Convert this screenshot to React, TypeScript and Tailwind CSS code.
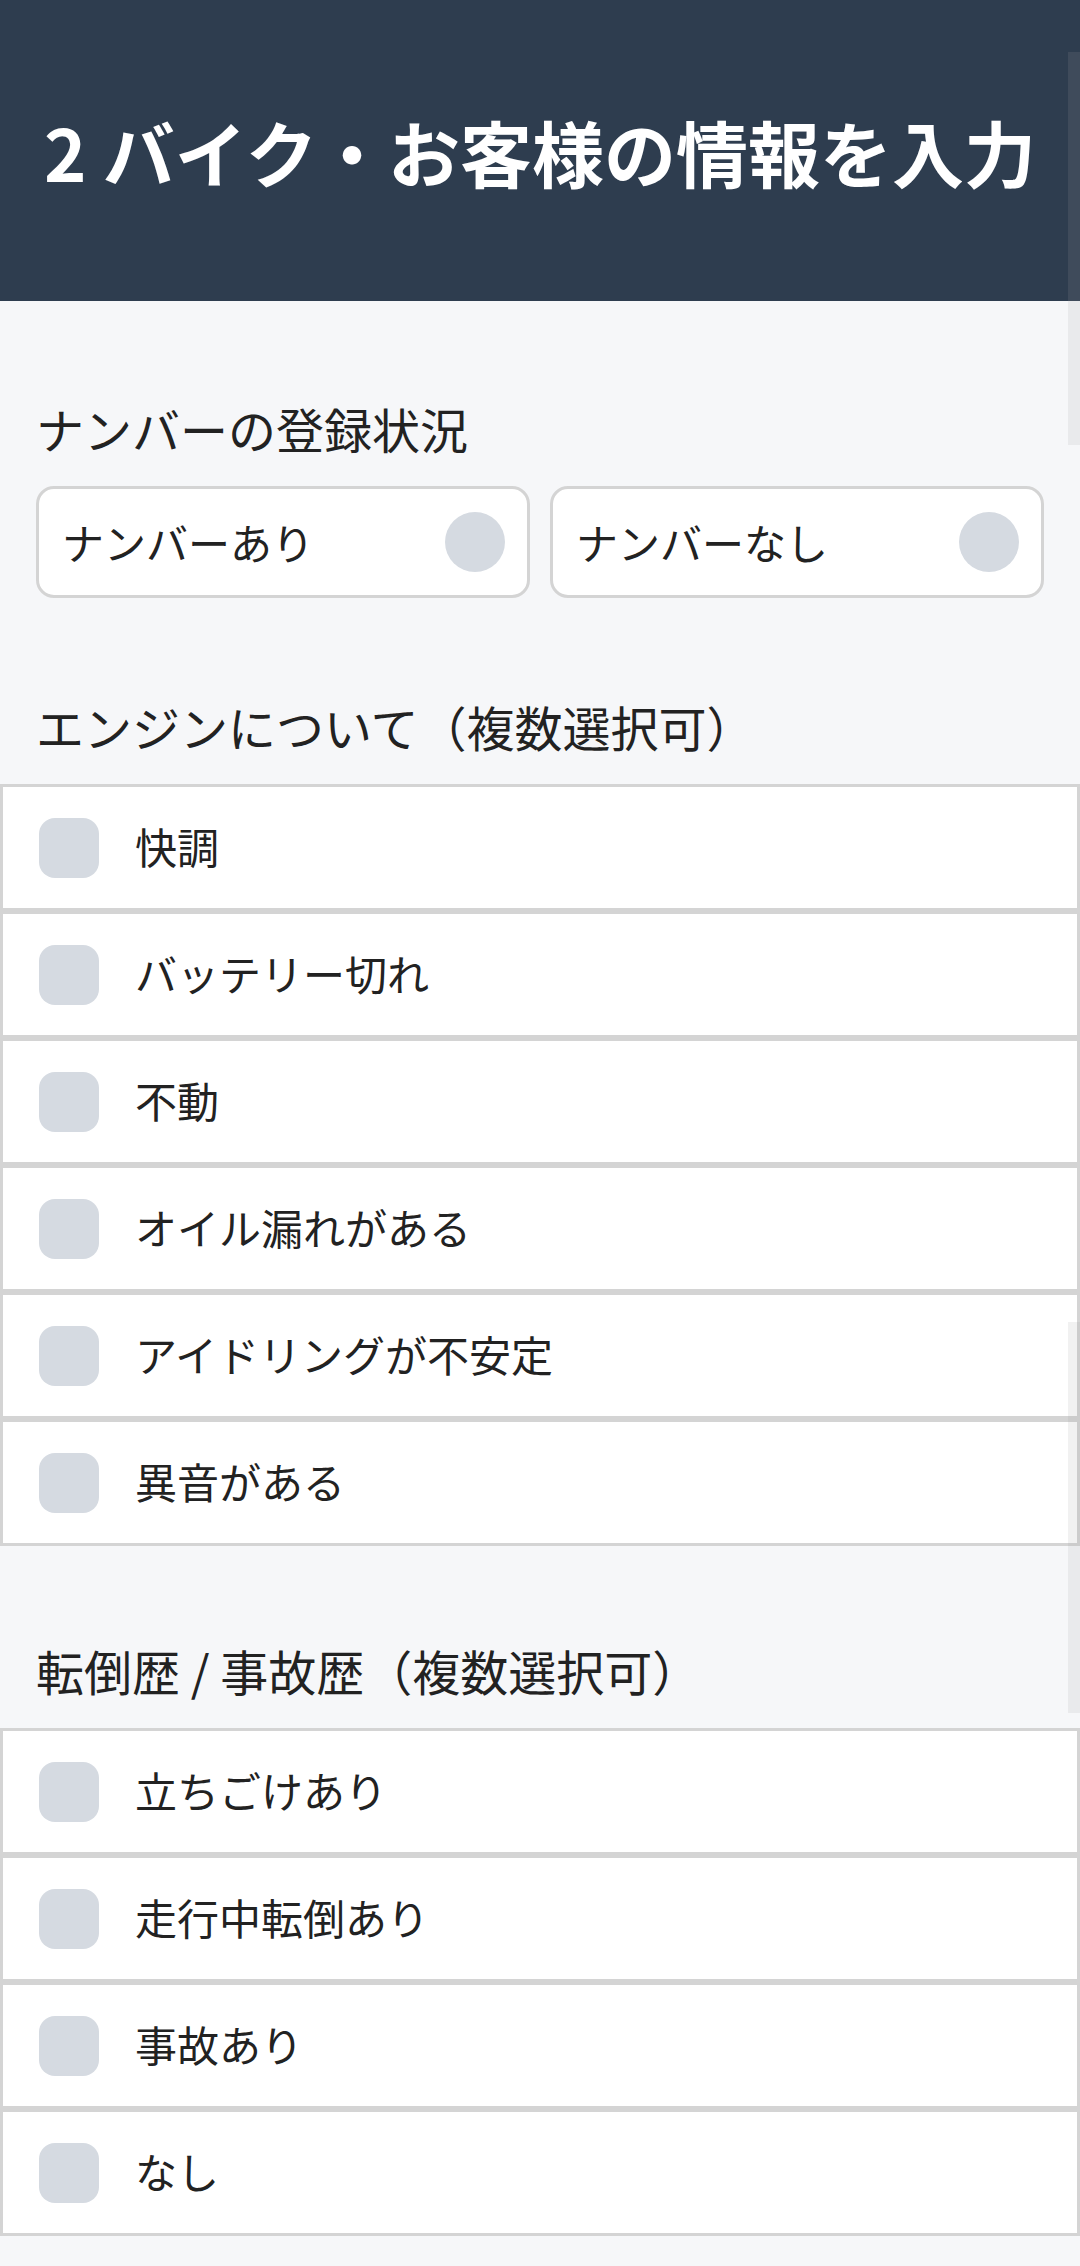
import React from "react";

const FONT = {
  fontFamily: '"Noto Sans CJK JP", "Noto Sans", sans-serif',
};

const engineOptions = [
  "快調",
  "バッテリー切れ",
  "不動",
  "オイル漏れがある",
  "アイドリングが不安定",
  "異音がある",
];

const accidentOptions = ["立ちごけあり", "走行中転倒あり", "事故あり", "なし"];

function SectionTitle({ children }: { children: React.ReactNode }) {
  return (
    <h2 className="mb-[22px] px-[36px] text-[48px] font-normal leading-[72px] text-[#222]">
      {children}
    </h2>
  );
}

function RadioCard({ label }: { label: string }) {
  return (
    <label className="flex h-[112px] items-center justify-between rounded-[18px] border-[3px] border-[#d4d4d4] bg-white pl-[23px] pr-[22px]">
      <span className="text-[42px] leading-none text-[#222]">{label}</span>
      <span className="h-[60px] w-[60px] rounded-full bg-[#d5dae1]" />
    </label>
  );
}

function CheckRow({ label }: { label: string }) {
  return (
    <label className="flex h-[127px] items-center border-[3px] border-[#d4d4d4] bg-white pl-[36px]">
      <span className="h-[60px] w-[60px] shrink-0 rounded-[16px] bg-[#d5dae1]" />
      <span className="ml-[36px] pb-[3px] text-[42px] leading-none text-[#222]">{label}</span>
    </label>
  );
}

export default function App() {
  return (
    <div className="relative min-h-[2266px] w-[1080px] bg-[#f6f7f9]" style={FONT}>
      <header className="flex h-[301px] items-center justify-center bg-[#2e3d4f]">
        <h1 className="text-[72px] font-bold leading-none text-white">
          2 バイク・お客様の情報を入力
        </h1>
      </header>

      <section className="pt-[91px]">
        <SectionTitle>ナンバーの登録状況</SectionTitle>
        <div className="grid grid-cols-2 gap-[20px] px-[36px]">
          <RadioCard label="ナンバーあり" />
          <RadioCard label="ナンバーなし" />
        </div>
      </section>

      <section className="pt-[92px]">
        <SectionTitle>エンジンについて（複数選択可）</SectionTitle>
        <div className="flex flex-col">
          {engineOptions.map((option) => (
            <CheckRow key={option} label={option} />
          ))}
        </div>
      </section>

      <section className="pt-[88px]">
        <SectionTitle>転倒歴 / 事故歴（複数選択可）</SectionTitle>
        <div className="flex flex-col">
          {accidentOptions.map((option) => (
            <CheckRow key={option} label={option} />
          ))}
        </div>
      </section>

      {/* scrollbar thumbs seen in the capture */}
      <div className="pointer-events-none absolute right-0 top-[52px] h-[393px] w-[12px] bg-[rgba(160,160,160,0.15)]" />
      <div className="pointer-events-none absolute right-0 top-[1322px] h-[391px] w-[12px] bg-[rgba(160,160,160,0.15)]" />
    </div>
  );
}
